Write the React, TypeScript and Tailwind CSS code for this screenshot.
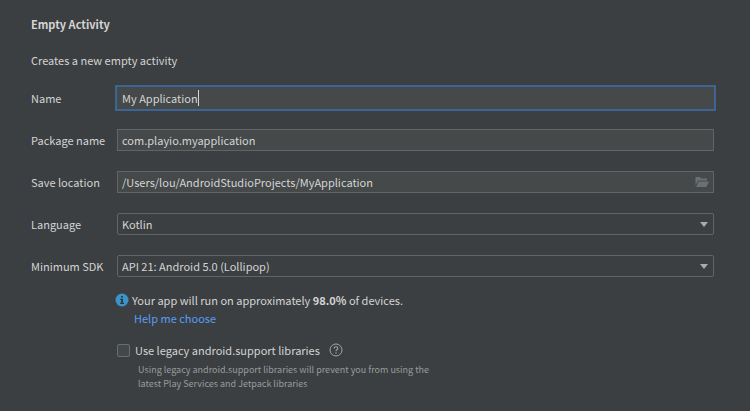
import { useState } from 'react';
import type { ReactNode } from 'react';

interface FieldRowProps {
  id: string;
  label: string;
  children: ReactNode;
}

function FieldRow({ id, label, children }: FieldRowProps) {
  return (
    <div className="flex items-center">
      <label htmlFor={id} className="w-[86px] shrink-0">
        {label}
      </label>
      {children}
    </div>
  );
}

interface SelectFieldProps {
  id: string;
  value: string;
  options: string[];
  onChange: (value: string) => void;
}

function SelectField({ id, value, options, onChange }: SelectFieldProps) {
  return (
    <div className="relative min-w-0 flex-1">
      <select
        id={id}
        value={value}
        onChange={(e) => onChange(e.target.value)}
        className="block h-[22px] w-full appearance-none rounded-[2px] border border-[#626466] bg-[#3c3f41] pr-6 pl-1 outline-none"
      >
        {options.map((option) => (
          <option key={option}>{option}</option>
        ))}
      </select>
      <svg
        viewBox="0 0 8 5"
        className="pointer-events-none absolute top-[9px] right-[6px] h-[5px] w-2"
        aria-hidden="true"
      >
        <path d="M0 0h8L4 5z" fill="#a9abad" />
      </svg>
    </div>
  );
}

function FolderIcon() {
  return (
    <svg viewBox="0 0 14 12" className="h-3 w-3.5" aria-hidden="true">
      <path d="M0.5 9.5V1h4.5l1.3 1.600h5.700v2H3.200z" fill="#6a7074" />
      <path d="M3.700 5.400H14l-2.600 5.600H1z" fill="#6a7074" />
    </svg>
  );
}

function InfoIcon() {
  return (
    <svg viewBox="0 0 14 14" className="h-3.5 w-3.5 shrink-0" aria-hidden="true">
      <circle cx="7" cy="7" r="6.5" fill="#3a94c9" />
      <path d="M6.1 2.9h1.9v1.7H6.1zM5.2 5.8H8v4h1v1.1H5.1V9.8h1V6.9h-.9z" fill="#2d3840" />
    </svg>
  );
}

function HelpIcon() {
  return (
    <svg viewBox="0 0 14 14" className="h-3.5 w-3.5" fill="none" stroke="#9da5aa" aria-hidden="true">
      <circle cx="7" cy="7" r="6" />
      <path d="M5.1 5.6c0-1.1.8-1.9 1.9-1.9s1.9.7 1.9 1.7C8.9 6.6 7 6.8 7 8.3" strokeWidth="1.1" />
      <path d="M7 9.3v1.2" strokeWidth="1.2" />
    </svg>
  );
}

export default function App() {
  const [name, setName] = useState('My Application');
  const [packageName, setPackageName] = useState('com.playio.myapplication');
  const [location, setLocation] = useState('/Users/lou/AndroidStudioProjects/MyApplication');
  const [language, setLanguage] = useState('Kotlin');
  const [sdk, setSdk] = useState('API 21: Android 5.0 (Lollipop)');
  const [legacy, setLegacy] = useState(false);

  return (
    <main className="min-h-screen bg-[#3c3f41] pt-[15px] pr-9 pb-4 pl-[31px] font-['Noto_Sans_CJK_KR','Noto_Sans',sans-serif] text-[11px] leading-[18px] text-[#d4d4d4]">
      <h1 className="font-bold">Empty Activity</h1>
      <p className="mt-[18px]">Creates a new empty activity</p>

      <form className="mt-[18px]" onSubmit={(e) => e.preventDefault()}>
        <div className="flex flex-col gap-5">
          <FieldRow id="name" label="Name">
            <div className="flex h-[22px] min-w-0 flex-1 items-center bg-[#45494a] pl-[5px] ring-2 ring-[#3d6594]">
              <input
                id="name"
                value={name}
                onChange={(e) => setName(e.target.value)}
                className="max-w-full bg-transparent [field-sizing:content] caret-transparent outline-none"
              />
              <span className="h-4 w-px bg-[#d4d4d4]" />
            </div>
          </FieldRow>
          <FieldRow id="package" label="Package name">
            <input
              id="package"
              value={packageName}
              onChange={(e) => setPackageName(e.target.value)}
              className="h-[22px] min-w-0 flex-1 border border-[#626466] bg-[#45494a] px-1 outline-none"
            />
          </FieldRow>
          <FieldRow id="location" label="Save location">
            <div className="flex h-[22px] min-w-0 flex-1 items-center border border-[#626466] bg-[#45494a] px-1">
              <input
                id="location"
                value={location}
                onChange={(e) => setLocation(e.target.value)}
                className="min-w-0 flex-1 bg-transparent outline-none"
              />
              <button type="button" aria-label="Browse">
                <FolderIcon />
              </button>
            </div>
          </FieldRow>
          <FieldRow id="language" label="Language">
            <SelectField id="language" value={language} options={['Kotlin', 'Java']} onChange={setLanguage} />
          </FieldRow>
          <FieldRow id="sdk" label="Minimum SDK">
            <SelectField id="sdk" value={sdk} options={['API 21: Android 5.0 (Lollipop)']} onChange={setSdk} />
          </FieldRow>
        </div>

        <div className="mt-[14px] pl-[84px]">
          <p className="flex items-center gap-[3px]">
            <InfoIcon />
            <span>
              Your app will run on approximately <strong>98.0%</strong> of devices.
            </span>
          </p>
          <a href="#help" className="ml-[19px] block w-fit text-[#589df6]">
            Help me choose
          </a>

          <div className="mt-[14px] flex items-center pl-[2px]">
            <input
              id="legacy"
              type="checkbox"
              checked={legacy}
              onChange={(e) => setLegacy(e.target.checked)}
              className="h-[13px] w-[13px] appearance-none rounded-[2px] border border-[#6b6e70] bg-[#43494a] checked:bg-[#589df6]"
            />
            <label htmlFor="legacy" className="ml-[5px]">
              Use legacy android.support libraries
            </label>
            <button type="button" aria-label="Help" className="ml-[9px]">
              <HelpIcon />
            </button>
          </div>
          <p className="mt-1 ml-[23px] max-w-[300px] text-[9px] leading-[14px] text-[#999b9c]">
            Using legacy android.support libraries will prevent you from using the latest Play Services and Jetpack
            libraries
          </p>
        </div>
      </form>
    </main>
  );
}
